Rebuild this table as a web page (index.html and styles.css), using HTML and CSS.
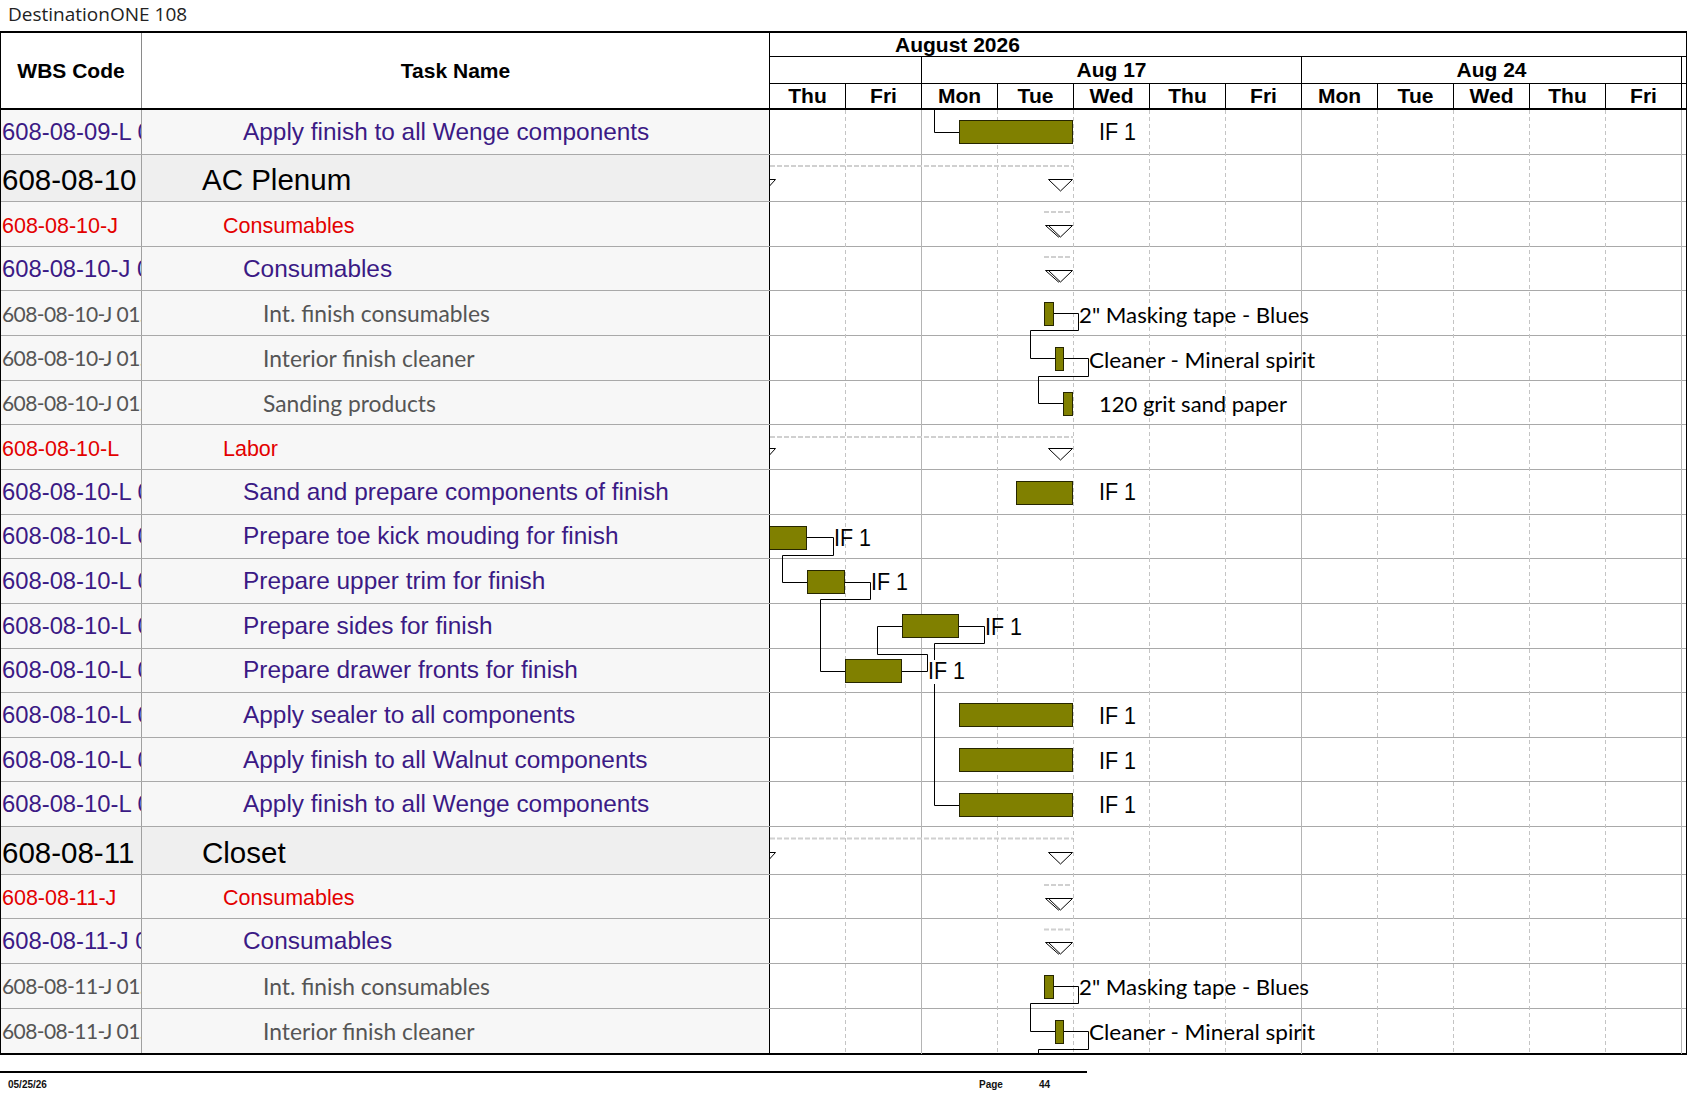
FILE: index.html
```html
<!DOCTYPE html>
<html>
<head>
<meta charset="utf-8">
<title>DestinationONE 108</title>
<link rel="stylesheet" href="styles.css">
</head>
<body>
<div class="doc-title">DestinationONE 108</div>
<div class="sheet">
  <div class="head">
    <div class="hcell wbs-h">WBS Code</div>
    <div class="hcell task-h">Task Name</div>
    <div class="timescale">
      <div class="ts-month"><span>August 2026</span></div>
      <div class="ts-weeks">
        <div class="wk"></div>
        <div class="wk">Aug 17</div>
        <div class="wk">Aug 24</div>
        <div class="wk stub"></div>
      </div>
      <div class="ts-days">
        <div class="day">Thu</div>
        <div class="day">Fri</div>
        <div class="day">Mon</div>
        <div class="day">Tue</div>
        <div class="day">Wed</div>
        <div class="day">Thu</div>
        <div class="day">Fri</div>
        <div class="day">Mon</div>
        <div class="day">Tue</div>
        <div class="day">Wed</div>
        <div class="day">Thu</div>
        <div class="day">Fri</div>
        <div class="day stub"></div>
      </div>
    </div>
  </div>

  <div class="body">
    <div class="row l3"><div class="wbs">608-08-09-L 03</div><div class="name">Apply finish to all Wenge components</div><div class="gcell"></div></div>
    <div class="row sum"><div class="wbs">608-08-10</div><div class="name">AC Plenum</div><div class="gcell"></div></div>
    <div class="row l2"><div class="wbs">608-08-10-J</div><div class="name">Consumables</div><div class="gcell"></div></div>
    <div class="row l3"><div class="wbs">608-08-10-J 01</div><div class="name">Consumables</div><div class="gcell"></div></div>
    <div class="row l4"><div class="wbs">608-08-10-J 01.01</div><div class="name">Int. finish consumables</div><div class="gcell"></div></div>
    <div class="row l4"><div class="wbs">608-08-10-J 01.02</div><div class="name">Interior finish cleaner</div><div class="gcell"></div></div>
    <div class="row l4"><div class="wbs">608-08-10-J 01.03</div><div class="name">Sanding products</div><div class="gcell"></div></div>
    <div class="row l2"><div class="wbs">608-08-10-L</div><div class="name">Labor</div><div class="gcell"></div></div>
    <div class="row l3"><div class="wbs">608-08-10-L 01</div><div class="name">Sand and prepare components of finish</div><div class="gcell"></div></div>
    <div class="row l3"><div class="wbs">608-08-10-L 02</div><div class="name">Prepare toe kick mouding for finish</div><div class="gcell"></div></div>
    <div class="row l3"><div class="wbs">608-08-10-L 03</div><div class="name">Prepare upper trim for finish</div><div class="gcell"></div></div>
    <div class="row l3"><div class="wbs">608-08-10-L 04</div><div class="name">Prepare sides for finish</div><div class="gcell"></div></div>
    <div class="row l3"><div class="wbs">608-08-10-L 05</div><div class="name">Prepare drawer fronts for finish</div><div class="gcell"></div></div>
    <div class="row l3"><div class="wbs">608-08-10-L 06</div><div class="name">Apply sealer to all components</div><div class="gcell"></div></div>
    <div class="row l3"><div class="wbs">608-08-10-L 07</div><div class="name">Apply finish to all Walnut components</div><div class="gcell"></div></div>
    <div class="row l3"><div class="wbs">608-08-10-L 08</div><div class="name">Apply finish to all Wenge components</div><div class="gcell"></div></div>
    <div class="row sum"><div class="wbs">608-08-11</div><div class="name">Closet</div><div class="gcell"></div></div>
    <div class="row l2"><div class="wbs">608-08-11-J</div><div class="name">Consumables</div><div class="gcell"></div></div>
    <div class="row l3"><div class="wbs">608-08-11-J 01</div><div class="name">Consumables</div><div class="gcell"></div></div>
    <div class="row l4"><div class="wbs">608-08-11-J 01.01</div><div class="name">Int. finish consumables</div><div class="gcell"></div></div>
    <div class="row l4"><div class="wbs">608-08-11-J 01.02</div><div class="name">Interior finish cleaner</div><div class="gcell"></div></div>

    <svg class="chart" viewBox="770 110 916 944" width="916" height="944" xmlns="http://www.w3.org/2000/svg">
      <g class="grid-dash">
        <line x1="845.5" y1="110" x2="845.5" y2="1054"/>
        <line x1="997.5" y1="110" x2="997.5" y2="1054"/>
        <line x1="1073.5" y1="110" x2="1073.5" y2="1054"/>
        <line x1="1149.5" y1="110" x2="1149.5" y2="1054"/>
        <line x1="1225.5" y1="110" x2="1225.5" y2="1054"/>
        <line x1="1377.5" y1="110" x2="1377.5" y2="1054"/>
        <line x1="1453.5" y1="110" x2="1453.5" y2="1054"/>
        <line x1="1529.5" y1="110" x2="1529.5" y2="1054"/>
        <line x1="1605.5" y1="110" x2="1605.5" y2="1054"/>
      </g>
      <g class="grid-solid">
        <line x1="921.5" y1="110" x2="921.5" y2="1054"/>
        <line x1="1301.5" y1="110" x2="1301.5" y2="1054"/>
        <line x1="1681.5" y1="110" x2="1681.5" y2="1054"/>
      </g>

      <g class="sdash">
        <line x1="770" y1="166" x2="1073" y2="166"/>
        <line x1="1044" y1="212" x2="1072" y2="212"/>
        <line x1="1044" y1="257" x2="1072" y2="257"/>
        <line x1="770" y1="437" x2="1073" y2="437"/>
        <line x1="770" y1="838.5" x2="1073" y2="838.5"/>
        <line x1="1044" y1="885" x2="1072" y2="885"/>
        <line x1="1044" y1="929.5" x2="1072" y2="929.5"/>
      </g>
      <g class="tri">
        <polygon points="755,179.5 775.5,179.5 765,191"/>
        <polygon points="1048.5,179.5 1072.5,179.5 1060.5,191"/>
        <polygon points="1045.5,225.5 1071.5,225.5 1058.5,237"/>
        <polygon points="1048.5,225.5 1072.5,225.5 1060.5,237"/>
        <polygon points="1045.5,270.5 1071.5,270.5 1058.5,282"/>
        <polygon points="1048.5,270.5 1072.5,270.5 1060.5,282"/>
        <polygon points="755,448.5 775.5,448.5 765,460"/>
        <polygon points="1048.5,448.5 1072.5,448.5 1060.5,460"/>
        <polygon points="755,852.5 775.5,852.5 765,864"/>
        <polygon points="1048.5,852.5 1072.5,852.5 1060.5,864"/>
        <polygon points="1045.5,898.5 1071.5,898.5 1058.5,910"/>
        <polygon points="1048.5,898.5 1072.5,898.5 1060.5,910"/>
        <polygon points="1045.5,942.5 1071.5,942.5 1058.5,954"/>
        <polygon points="1048.5,942.5 1072.5,942.5 1060.5,954"/>
      </g>

      <g class="link">
        <path d="M934.5 110 V132.5 H959"/>
        <path d="M1054 313.5 H1078.5 V330.5 H1030.5 V358.5 H1055"/>
        <path d="M1063 358.5 H1088.5 V376.5 H1038.5 V403.5 H1063"/>
        <path d="M807 537.5 H833.5 V555.5 H782.5 V582.5 H807"/>
        <path d="M845 582.5 H870.5 V599.5 H820.5 V671.5 H845"/>
        <path d="M902 671.5 H927.5 V654.5 H877.5 V626.5 H902"/>
        <path d="M958 626.5 H984.5 V643.5 H934.5 V805.5 H959"/>
        <path d="M1054 986.5 H1078.5 V1003.5 H1030.5 V1031.5 H1055"/>
        <path d="M1063 1031.5 H1088.5 V1049.5 H1038.5 V1054"/>
      </g>

      <g class="bar">
        <rect x="959.5" y="120.5" width="113" height="23"/>
        <rect x="1044.5" y="302.5" width="9" height="23"/>
        <rect x="1055.5" y="347.5" width="8" height="23"/>
        <rect x="1063.5" y="392.5" width="9" height="23"/>
        <rect x="1016.5" y="481.5" width="56" height="23"/>
        <rect x="769.5" y="526.5" width="37" height="23"/>
        <rect x="807.5" y="570.5" width="37" height="23"/>
        <rect x="902.5" y="614.5" width="56" height="23"/>
        <rect x="845.5" y="659.5" width="56" height="23"/>
        <rect x="959.5" y="703.5" width="113" height="23"/>
        <rect x="959.5" y="748.5" width="113" height="23"/>
        <rect x="959.5" y="793.5" width="113" height="23"/>
        <rect x="1044.5" y="975.5" width="9" height="23"/>
        <rect x="1055.5" y="1020.5" width="8" height="23"/>
      </g>

      <rect class="lblbg" x="928" y="660" width="38" height="24"/>

      <g class="lbl">
        <text x="1099" y="140" textLength="37" lengthAdjust="spacingAndGlyphs">IF 1</text>
        <text x="1099" y="500" textLength="37" lengthAdjust="spacingAndGlyphs">IF 1</text>
        <text x="834" y="545.5" textLength="37" lengthAdjust="spacingAndGlyphs">IF 1</text>
        <text x="871" y="590" textLength="37" lengthAdjust="spacingAndGlyphs">IF 1</text>
        <text x="985" y="634.5" textLength="37" lengthAdjust="spacingAndGlyphs">IF 1</text>
        <text x="928" y="679" textLength="37" lengthAdjust="spacingAndGlyphs">IF 1</text>
        <text x="1099" y="724" textLength="37" lengthAdjust="spacingAndGlyphs">IF 1</text>
        <text x="1099" y="768.5" textLength="37" lengthAdjust="spacingAndGlyphs">IF 1</text>
        <text x="1099" y="813" textLength="37" lengthAdjust="spacingAndGlyphs">IF 1</text>
      </g>
      <g class="mat">
        <text x="1079" y="322.5" textLength="230" lengthAdjust="spacingAndGlyphs">2&quot; Masking tape - Blues</text>
        <text x="1089" y="367.5" textLength="226" lengthAdjust="spacingAndGlyphs">Cleaner - Mineral spirit</text>
        <text x="1099" y="412" textLength="188" lengthAdjust="spacingAndGlyphs">120 grit sand paper</text>
        <text x="1079" y="995" textLength="230" lengthAdjust="spacingAndGlyphs">2&quot; Masking tape - Blues</text>
        <text x="1089" y="1040" textLength="226" lengthAdjust="spacingAndGlyphs">Cleaner - Mineral spirit</text>
      </g>
    </svg>
  </div>
</div>
<div class="footer">
  <div class="f-date">05/25/26</div>
  <div class="f-page">Page</div>
  <div class="f-num">44</div>
</div>
</body>
</html>
```

FILE: styles.css
```css
* {
  box-sizing: border-box;
}

html,
body {
  margin: 0;
  padding: 0;
  background: #ffffff;
}

body {
  width: 1687px;
  height: 1097px;
  overflow: hidden;
  font-family: "Liberation Sans", Arial, sans-serif;
  color: #000;
}

.doc-title {
  height: 31px;
  padding: 3px 0 0 8px;
  font-family: "Open Sans", "Liberation Sans", sans-serif;
  font-size: 19px;
  line-height: 23px;
  color: #222;
}

.sheet {
  width: 1687px;
  border-top: 2px solid #000;
  border-left: 1px solid #000;
  border-right: 1px solid #000;
  border-bottom: 2px solid #000;
}

/* ---------- header ---------- */
.head {
  display: grid;
  grid-template-columns: 141px 628px 916px;
  border-bottom: 2px solid #000;
}

.hcell {
  height: 75px;
  display: flex;
  align-items: center;
  justify-content: center;
  font-weight: bold;
  font-size: 21px;
}

.wbs-h {
  border-right: 1px solid #8a8a8a;
}

.task-h {
  border-right: 1px solid #000;
}

.timescale {
  display: flex;
  flex-direction: column;
  font-weight: bold;
  font-size: 21px;
}

.ts-month {
  height: 24px;
  border-bottom: 1px solid #000;
  padding-left: 125px;
  display: flex;
  align-items: center;
}

.ts-weeks {
  height: 27px;
  border-bottom: 1px solid #000;
  display: grid;
  grid-template-columns: 152px 380px 380px 1fr;
}

.wk,
.day {
  border-right: 1px solid #000;
  display: flex;
  align-items: center;
  justify-content: center;
}

.wk.stub,
.day.stub {
  border-right: none;
}

.ts-days {
  height: 24px;
  display: grid;
  grid-template-columns: repeat(12, 76px) 1fr;
}

/* ---------- body ---------- */
.body {
  position: relative;
}

.row {
  display: grid;
  grid-template-columns: 141px 628px 916px;
  height: 44.65px;
  border-bottom: 1px solid #a9a9a9;
}

.row:last-of-type {
  border-bottom: none;
}

.row.sum {
  height: 47.5px;
  font-size: 29.5px;
  color: #000;
}

.wbs {
  border-right: 1px solid #a0a0a0;
  background: #f7f7f7;
  white-space: nowrap;
  overflow: hidden;
  display: flex;
  align-items: center;
  padding-left: 1px;
}

.name {
  border-right: 1px solid #000;
  background: #f7f7f7;
  white-space: nowrap;
  overflow: hidden;
  display: flex;
  align-items: center;
}

.row.sum .wbs,
.row.sum .name {
  background: #efefef;
  padding-top: 5px;
}

.row.sum .name {
  padding-left: 60px;
}

.row.l2 {
  font-size: 21.5px;
  color: #e30000;
}

.row.l2 .wbs,
.row.l2 .name {
  padding-top: 5px;
}

.row.l2 .name {
  padding-left: 81px;
}

.row.l3 {
  font-size: 24.4px;
  color: #3b1a85;
}

.row.l3 .wbs {
  font-size: 23.8px;
}

.row.l3 .name {
  padding-left: 101px;
}

.row.l4 {
  font-family: Lato, "Liberation Sans", sans-serif;
  font-size: 22.8px;
  color: #555;
}

.row.l4 .wbs {
  font-size: 21px;
  letter-spacing: -0.6px;
}

.row.l4 .name {
  padding-left: 121px;
}

.gcell {
  background: #fff;
}

/* ---------- chart drawing ---------- */
.chart {
  position: absolute;
  left: 769px;
  top: 0;
  overflow: hidden;
}

.grid-dash line {
  stroke: #c4c4c4;
  stroke-width: 1;
  stroke-dasharray: 4 3;
}

.grid-solid line {
  stroke: #b4b4b4;
  stroke-width: 1;
}

.sdash line {
  stroke: #d0d0d0;
  stroke-width: 2;
  stroke-dasharray: 5 2;
}

.tri polygon {
  fill: #fff;
  stroke: #000;
  stroke-width: 1;
}

.link path {
  fill: none;
  stroke: #000;
  stroke-width: 1;
}

.bar rect {
  fill: #808000;
  stroke: #262600;
  stroke-width: 1;
}

.lblbg {
  fill: #fff;
}

.lbl text {
  font-family: "Liberation Sans", Arial, sans-serif;
  font-size: 24px;
  fill: #000;
}

.mat text {
  font-family: Lato, "Liberation Sans", sans-serif;
  font-size: 21px;
  fill: #000;
}

/* ---------- footer ---------- */
.footer {
  margin-top: 16px;
  width: 1087px;
  border-top: 2px solid #000;
  display: flex;
  padding-top: 6px;
  font-size: 10px;
  font-weight: bold;
  color: #111;
}

.f-date {
  width: 979px;
  padding-left: 8px;
}

.f-page {
  width: 60px;
}
```
